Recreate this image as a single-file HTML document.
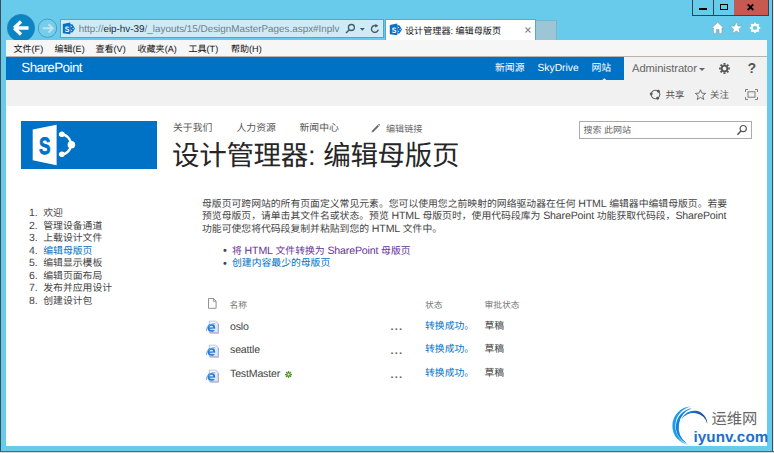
<!DOCTYPE html>
<html lang="zh-CN">
<head>
<meta charset="utf-8">
<title>设计管理器: 编辑母版页</title>
<style>
*{box-sizing:border-box;margin:0;padding:0}
html,body{width:774px;height:453px;overflow:hidden}
body{position:relative;background:#69cbeb;font-family:"Liberation Sans",sans-serif;font-size:9.83px;color:#444;line-height:1;text-rendering:geometricPrecision}
.abs,.t{position:absolute;white-space:nowrap}
.t{line-height:12px;height:12px}
svg{position:absolute;overflow:visible}
a{text-decoration:none;color:inherit}
.en{font-size:10.6px;letter-spacing:-0.15px}
.blue{color:#0072c6}
.vis{color:#663399}
/* window frame */
#edgeL{left:0;top:0;width:1px;height:452px;background:#3b4f5a}
#edgeR{left:772px;top:0;width:1px;height:452px;background:#3b4f5a}
#edgeR2{left:773px;top:0;width:1px;height:453px;background:#e8e8e8}
#edgeB{left:0;top:451px;width:774px;height:1px;background:#4a6a78}
#under{left:0;top:452px;width:774px;height:1px;background:#d9d9d9}
/* window buttons */
#wb{left:692px;top:0;width:76.5px;height:16px;border-left:1px solid #2f4650;border-bottom:1px solid #2f4650;border-right:1px solid #2f4650}
#wbdiv{left:713px;top:0;width:1px;height:15px;background:#2f4650}
#wbclose{left:733.5px;top:0;width:34.5px;height:15px;background:#c75a50}
/* nav */
#addr{left:60px;top:19px;width:324px;height:19px;background:#cdecf8;border:1px solid #4fa8cb;border-bottom-width:1.4px;border-right-width:1.6px}
#tab{left:385px;top:19px;width:151px;height:22px;background:#fff;border:1px solid #5aa7c6;border-bottom:none}
#newtab{left:536px;top:19.5px;width:20.6px;height:20.5px;background:#9cc6d6;border:1px solid #78b4cb;border-left:none;border-bottom:none}
#menubar{left:6px;top:40px;width:761px;height:17px;background:#f6f6f6;border-bottom:1px solid #b9b4ae}
.menu{top:43px;font-size:9.05px;color:#111}
/* page */
#page{left:6px;top:57px;width:761px;height:389px;background:#fff}
#suite{left:6px;top:57px;width:618px;height:23px;background:#0072c6}
#ribbon{left:6px;top:80px;width:761px;height:25.5px;background:#f1f1f1}
#suiteR{left:624px;top:57px;width:143px;height:23px;background:#f1f1f1}
#brand{left:21.3px;top:60.3px;font-size:13.4px;color:#fff;line-height:16px;height:16px;letter-spacing:-0.56px}
.sl{top:62.5px;font-size:9.85px;color:#fff}
#logo{left:21px;top:120.5px;width:136px;height:48px;background:#0072c6}
.nav{top:123.4px;font-size:9.83px;color:#555}
#title{left:172px;top:139.3px;font-size:27.5px;line-height:34px;height:34px;color:#262626;letter-spacing:-0.3px;word-spacing:0.5px}
#search{left:579px;top:121px;width:173px;height:18px;border:1px solid #ababab;background:#fff}
.li{left:29px;font-size:9.83px}
.li b{font-weight:normal;display:inline-block;width:14.3px;font-size:10.5px}
.p{left:202px}
.bul{left:223px;font-size:11px;color:#444}
.row{font-size:10.6px;letter-spacing:-0.17px}
.hd{font-size:8.75px;color:#777;top:298.7px}
</style>
</head>
<body>
<!-- frame edges -->
<div class="abs" id="edgeL"></div><div class="abs" id="edgeR"></div><div class="abs" id="edgeR2"></div>
<div class="abs" id="edgeB"></div><div class="abs" id="under"></div>

<!-- window buttons -->
<div class="abs" id="wb"></div><div class="abs" id="wbdiv"></div><div class="abs" id="wbclose"></div>
<div class="abs" style="left:699px;top:8px;width:8px;height:2.4px;background:#000"></div>
<div class="abs" style="left:720px;top:4.2px;width:7.6px;height:6.2px;border:1.75px solid #000"></div>
<svg style="left:747.4px;top:4.1px" width="7" height="6.4" viewBox="0 0 7 6.4"><path d="M0.7 0.4 L6.3 6 M6.3 0.4 L0.7 6" stroke="#000" stroke-width="1.8" fill="none"/></svg>

<!-- back / forward -->
<svg style="left:6px;top:13px" width="30" height="27" viewBox="6 13 30 27">
  <circle cx="21" cy="28" r="13.6" fill="#0b84c4" stroke="#2a7eae" stroke-width="0.8"/>
  <path d="M14.2 28 L21 21.6 M14.2 28 L21 34.4 M14.6 28 L28.6 28" stroke="#fff" stroke-width="3.4" fill="none" stroke-linecap="butt" stroke-linejoin="miter"/>
</svg>
<svg style="left:37px;top:18px" width="21" height="21" viewBox="37 18 21 21">
  <circle cx="47.5" cy="28.2" r="9.2" fill="#72ceec" stroke="#4b9dbe" stroke-width="1"/>
  <path d="M42.6 28.3 L52.4 28.3 M48.6 24.2 L52.6 28.3 L48.6 32.4" stroke="#c4e1ec" stroke-width="2.1" fill="none"/>
</svg>

<!-- address bar -->
<div class="abs" id="addr"></div>
<svg style="left:62px;top:22px" width="14" height="13" viewBox="0 0 14 13"><use href="#fav"/></svg>
<div class="t" style="left:78.7px;top:23.3px;font-size:9.9px;color:#737b80;line-height:13px;height:13px">http://<span style="color:#222b30">eip-hv-39</span>/_layouts/15/DesignMasterPages.aspx#Inplv</div>
<svg style="left:344px;top:22px" width="36" height="13" viewBox="344 22 36 13">
  <circle cx="351.4" cy="27.5" r="3" fill="none" stroke="#4a5a62" stroke-width="1.3"/>
  <path d="M349.4 29.7 L346 33" stroke="#4a5a62" stroke-width="1.5"/>
  <path d="M359.8 28 L364.9 28 L362.35 30.7 Z" fill="#4a5a62"/>
  <path d="M376.5 26 A3.4 3.4 0 1 0 378.2 29.6" fill="none" stroke="#4a5a62" stroke-width="1.4"/>
  <path d="M375.5 23.7 L378.4 25.9 L375.1 27.5 Z" fill="#4a5a62"/>
</svg>

<!-- tab -->
<div class="abs" id="tab"></div><div class="abs" id="newtab"></div>
<svg style="left:389.2px;top:23.3px" width="14" height="13" viewBox="0 0 14 13"><use href="#fav"/></svg>
<div class="t" style="left:405px;top:24.5px;font-size:9.1px;color:#111;line-height:13px;height:13px">设计管理器: 编辑母版页</div>
<svg style="left:524.5px;top:27px" width="6" height="6" viewBox="0 0 6 6"><path d="M0.5 0.5 L5.5 5.5 M5.5 0.5 L0.5 5.5" stroke="#8a8a8a" stroke-width="1.1"/></svg>

<!-- home / star / gear -->
<svg style="left:711px;top:21px" width="52" height="14" viewBox="711 21 52 14">
  <g fill="#fff" stroke="#7d9aa6" stroke-width="0.6">
    <path d="M717.7 22.3 L723.6 28 L722 28 L722 33.4 L719 33.4 L719 29.6 L716.4 29.6 L716.4 33.4 L713.4 33.4 L713.4 28 L711.8 28 Z"/>
    <path d="M736.3 21.6 L738 26 L742.6 26.2 L739 29.1 L740.3 33.6 L736.3 31 L732.3 33.6 L733.6 29.1 L730 26.2 L734.6 26 Z"/>
  </g>
  <g stroke="#fff" fill="none">
    <circle cx="755" cy="27.9" r="3.1" stroke-width="1.9"/>
    <path d="M755 22.7 V24.3 M755 31.5 V33.1 M749.8 27.9 H751.4 M758.6 27.9 H760.2 M751.3 24.2 L752.4 25.3 M757.6 30.5 L758.7 31.6 M758.7 24.2 L757.6 25.3 M752.4 30.5 L751.3 31.6" stroke-width="1.9"/>
  </g>
</svg>

<!-- menu bar -->
<div class="abs" id="menubar"></div>
<div class="t menu" style="left:13.5px">文件(F)</div>
<div class="t menu" style="left:54.5px">编辑(E)</div>
<div class="t menu" style="left:95.5px">查看(V)</div>
<div class="t menu" style="left:137.5px">收藏夹(A)</div>
<div class="t menu" style="left:188.5px">工具(T)</div>
<div class="t menu" style="left:231px">帮助(H)</div>

<!-- page -->
<div class="abs" id="page"></div>
<div class="abs" id="ribbon"></div>
<div class="abs" id="suite"></div>
<div class="abs" id="suiteR"></div>
<div class="t" id="brand">SharePoint</div>
<div class="t sl" style="left:495px">新闻源</div>
<div class="t sl" style="left:537.5px;font-size:10.3px">SkyDrive</div>
<div class="t sl" style="left:591.5px">网站</div>
<svg style="left:601.6px;top:77.6px" width="4.6" height="2.4" viewBox="0 0 7 3"><path d="M0 3 L3.5 0 L7 3 Z" fill="#f4f4f4"/></svg>
<div class="t" style="left:632px;top:62.5px;font-size:11.2px;color:#666;letter-spacing:-0.08px">Administrator</div>
<svg style="left:698.5px;top:67.5px" width="6" height="3" viewBox="0 0 6 3"><path d="M0 0 L6 0 L3 3 Z" fill="#666"/></svg>
<!-- sp gear -->
<svg style="left:719px;top:63px" width="11" height="11" viewBox="-6 -6 12 12">
  <g stroke="#555" fill="none">
    <circle r="3.1" stroke-width="2"/>
    <path d="M0 -5.9 V-4 M0 4 V5.9 M-5.9 0 H-4 M4 0 H5.9 M-4.2 -4.2 L-2.9 -2.9 M2.9 2.9 L4.2 4.2 M4.2 -4.2 L2.9 -2.9 M-2.9 2.9 L-4.2 4.2" stroke-width="2.2"/>
  </g>
</svg>
<div class="t" style="left:747.6px;top:61.6px;font-size:14.2px;font-weight:bold;color:#555;line-height:15px;height:15px">?</div>

<!-- ribbon row icons -->
<svg style="left:650.4px;top:89.4px" width="11" height="11" viewBox="-5.5 -5.5 11 11">
  <circle r="4.3" fill="none" stroke="#6a6a6a" stroke-width="1.1"/>
  <circle cx="2.9" cy="-3.3" r="1.45" fill="#5a5a5a"/><circle cx="-4.3" cy="-0.5" r="1.45" fill="#5a5a5a"/><circle cx="2.1" cy="3.8" r="1.45" fill="#5a5a5a"/>
</svg>
<div class="t" style="left:665.5px;top:89px;font-size:9.4px;color:#555">共享</div>
<svg style="left:694.5px;top:88.5px" width="11" height="11" viewBox="-5.5 -5.8 11 11"><path d="M0 -5 L1.5 -1.6 L5.2 -1.4 L2.3 1 L3.3 4.7 L0 2.6 L-3.3 4.7 L-2.3 1 L-5.2 -1.4 L-1.5 -1.6 Z" fill="none" stroke="#666" stroke-width="0.9"/></svg>
<div class="t" style="left:710px;top:89px;font-size:9.4px;color:#555">关注</div>
<svg style="left:745px;top:89px" width="13" height="11" viewBox="0 0 13 11">
  <path d="M0.5 3 V0.5 H3 M10 0.5 H12.5 V3 M12.5 8 V10.5 H10 M3 10.5 H0.5 V8" fill="none" stroke="#707070" stroke-width="0.9"/>
  <rect x="3" y="2.8" width="7" height="5.4" fill="none" stroke="#707070" stroke-width="0.9"/>
</svg>

<!-- logo -->
<div class="abs" id="logo"></div>
<svg style="left:21px;top:120.5px" width="136" height="48" viewBox="21 120.5 136 48">
  <circle cx="60.8" cy="143.9" r="10.1" fill="none" stroke="#fff" stroke-width="2.4"/>
  <circle cx="61.9" cy="133.8" r="2.8" fill="#fff"/><circle cx="71.4" cy="144.2" r="3.8" fill="#fff"/><circle cx="61.9" cy="153.7" r="2.8" fill="#fff"/>
  <rect x="40" y="128" width="18.9" height="33" fill="#0072c6"/>
  <path d="M32.7 129 L56.6 124.3 L56.6 164.8 L32.7 159.8 Z" fill="#fff"/>
  <text x="0" y="0" font-family="Liberation Sans, sans-serif" font-size="20" font-weight="bold" fill="#0072c6" stroke="#0072c6" stroke-width="0.7" transform="translate(38.9 153) scale(0.86 1.18)">S</text>
</svg>

<!-- top nav -->
<div class="t nav" style="left:173px">关于我们</div>
<div class="t nav" style="left:236.5px">人力资源</div>
<div class="t nav" style="left:299.5px">新闻中心</div>
<svg style="left:371.3px;top:123.2px" width="10" height="10" viewBox="0 0 10 10"><path d="M0.5 9.5 L1 7.6 L2.4 9 Z" fill="#666"/><path d="M1.7 8.3 L7.3 2.7" stroke="#666" stroke-width="1.9"/><path d="M7.8 2.2 L8.6 1.4" stroke="#666" stroke-width="1.9"/></svg>
<div class="t nav" style="left:386px;font-size:9.1px;color:#666">编辑链接</div>
<div class="t" id="title">设计管理器: 编辑母版页</div>

<!-- search -->
<div class="abs" id="search"></div>
<div class="t" style="left:583.5px;top:124.2px;font-size:9px;color:#666">搜索 此网站</div>
<svg style="left:736px;top:124px" width="12" height="12" viewBox="0 0 12 12"><circle cx="7.2" cy="4.6" r="3.1" fill="none" stroke="#555" stroke-width="1.2"/><path d="M5 7 L1.4 10.8" stroke="#555" stroke-width="1.6"/></svg>

<!-- left list -->
<div class="t li" style="top:207.1px"><b>1.</b>欢迎</div>
<div class="t li" style="top:219.6px"><b>2.</b>管理设备通道</div>
<div class="t li" style="top:232.1px"><b>3.</b>上载设计文件</div>
<div class="t li" style="top:244.6px"><b>4.</b><span class="blue">编辑母版页</span></div>
<div class="t li" style="top:257.1px"><b>5.</b>编辑显示模板</div>
<div class="t li" style="top:269.6px"><b>6.</b>编辑页面布局</div>
<div class="t li" style="top:282.1px"><b>7.</b>发布并应用设计</div>
<div class="t li" style="top:294.6px"><b>8.</b>创建设计包</div>

<!-- intro text -->
<div class="t p" style="top:198.1px">母版页可跨网站的所有页面定义常见元素。您可以使用您之前映射的网络驱动器在任何 <span class="en">HTML</span> 编辑器中编辑母版页。若要</div>
<div class="t p" style="top:210.3px">预览母版页，请单击其文件名或状态。预览 <span class="en">HTML</span> 母版页时，使用代码段库为 <span class="en">SharePoint</span> 功能获取代码段，<span class="en">SharePoint</span></div>
<div class="t p" style="top:222.5px">功能可使您将代码段复制并粘贴到您的 <span class="en">HTML</span> 文件中。</div>

<div class="t bul" style="top:245.2px">•</div>
<div class="t vis" style="left:232px;top:245.2px">将 <span class="en">HTML</span> 文件转换为 <span class="en">SharePoint</span> 母版页</div>
<div class="t bul" style="top:257.7px">•</div>
<div class="t blue" style="left:232px;top:257.7px">创建内容最少的母版页</div>

<!-- table header -->
<svg style="left:207.6px;top:298.2px" width="9" height="11" viewBox="0 0 9 11"><path d="M0.5 0.5 H5.4 L8.1 3.2 V10.3 H0.5 Z M5.4 0.5 V3.2 H8.1" fill="#fff" stroke="#808080" stroke-width="0.85"/></svg>
<div class="t hd" style="left:229.5px">名称</div>
<div class="t hd" style="left:425px">状态</div>
<div class="t hd" style="left:484.5px">审批状态</div>

<!-- rows -->
<svg style="left:205.5px;top:320px" width="14" height="14" viewBox="0 0 14 14"><use href="#ie"/></svg>
<svg style="left:205.5px;top:344px" width="14" height="14" viewBox="0 0 14 14"><use href="#ie"/></svg>
<svg style="left:205.5px;top:368.5px" width="14" height="14" viewBox="0 0 14 14"><use href="#ie"/></svg>
<svg width="0" height="0" style="left:0;top:0"><defs>
  <g id="fav">
    <path d="M8.3 1.9 L10.6 2.6 L13 6.4 L10.6 10.2 L8.3 10.8 Z" fill="#0b6fc4"/>
    <circle cx="9.6" cy="4.4" r="0.55" fill="#cfe4f6"/><circle cx="11.2" cy="6.4" r="0.7" fill="#cfe4f6"/><circle cx="9.6" cy="8.4" r="0.55" fill="#cfe4f6"/>
    <path d="M0.8 1.9 L8.3 0.6 L8.3 12.2 L0.8 11.2 Z" fill="#0b6fc4"/>
    <text x="2.2" y="9.5" font-family="Liberation Sans, sans-serif" font-size="8" font-weight="bold" fill="#fff" transform="translate(0.9 0) scale(0.86 1)">S</text>
  </g>
  <g id="ie">
    <path d="M4 2.1 H10.6 L12.8 4.2 V13.4 H4 Z" fill="#9a9ad2"/>
    <path d="M3.2 1.2 H9.8 L12 3.3 V12.6 H3.2 Z" fill="#e4eafb" stroke="#a9b4de" stroke-width="0.7"/>
    <path d="M4.6 2.4 H9.1 V4 H10.9" fill="none" stroke="#fff" stroke-width="0.9"/>
    <circle cx="5.3" cy="7.9" r="3" fill="none" stroke="#2a7bd6" stroke-width="1.8"/>
    <path d="M3 8.1 H8.4" stroke="#2a7bd6" stroke-width="1.4"/>
    <path d="M6.4 9.4 H9.6" stroke="#e4eafb" stroke-width="1.4"/>
    <path d="M0.6 11 C-0.6 7.4 4.4 3 9.4 3.8" fill="none" stroke="#66aaf0" stroke-width="1"/>
  </g>
</defs></svg>

<div class="t row" style="left:230px;top:320.6px">oslo</div>
<div class="t row" style="left:230px;top:344px">seattle</div>
<div class="t row" style="left:230px;top:368px">TestMaster</div>
<svg style="left:284.7px;top:371.2px" width="7" height="7" viewBox="-3.5 -3.5 7 7"><path d="M0 -3.5 V3.5 M-3.5 0 H3.5 M-2.5 -2.5 L2.5 2.5 M2.5 -2.5 L-2.5 2.5" stroke="#4a9a26" stroke-width="1.25"/><circle r="2" fill="#4a9a26"/><circle r="1" fill="#fff"/></svg>

<div class="t" style="left:390.5px;top:321px;font-size:11px;font-weight:bold;color:#666;letter-spacing:1.2px">...</div>
<div class="t" style="left:390.5px;top:344.6px;font-size:11px;font-weight:bold;color:#666;letter-spacing:1.2px">...</div>
<div class="t" style="left:390.5px;top:368.6px;font-size:11px;font-weight:bold;color:#666;letter-spacing:1.2px">...</div>

<div class="t blue" style="left:425px;top:320.6px">转换成功。</div>
<div class="t blue" style="left:425px;top:344px">转换成功。</div>
<div class="t blue" style="left:425px;top:368px">转换成功。</div>
<div class="t" style="left:484.5px;top:320.6px">草稿</div>
<div class="t" style="left:484.5px;top:344px">草稿</div>
<div class="t" style="left:484.5px;top:368px">草稿</div>

<!-- watermark -->
<svg style="left:668px;top:403px" width="44" height="46" viewBox="668 403 44 46">
  <defs>
    <linearGradient id="g3" x1="0" y1="0" x2="1" y2="0"><stop offset="0" stop-color="#2b93e4"/><stop offset="0.5" stop-color="#2468ba"/><stop offset="1" stop-color="#1f4586"/></linearGradient>
    <linearGradient id="g1" x1="0" y1="0" x2="0" y2="1"><stop offset="0" stop-color="#1a9ae6"/><stop offset="0.8" stop-color="#1aa0ea"/><stop offset="1" stop-color="#a8d8f5"/></linearGradient>
  </defs>
  <path d="M690.9 406.6 A19.30 19.30 0 0 0 689.9 445.1 A19.84 19.84 0 0 1 690.9 406.6 Z" fill="url(#g1)"/>
  <path d="M692.0 408.3 A18.42 18.42 0 0 0 686.8 443.4 A20.18 20.18 0 0 1 692.0 408.3 Z" fill="#1482d7"/>
  <path d="M681.4 419.8 A13.28 13.28 0 0 1 707.3 424.1 A14.12 14.12 0 0 0 681.4 419.8 Z" fill="url(#g3)"/>
</svg>
<div class="t" style="left:711.5px;top:411px;font-size:15.3px;line-height:18px;height:18px;color:#666">运维网</div>
<div class="t" style="left:693.5px;top:428.7px;font-size:15.2px;line-height:18px;height:18px;font-weight:bold;color:#1b6fd0;letter-spacing:0.1px">iyunv.com</div>
</body>
</html>
